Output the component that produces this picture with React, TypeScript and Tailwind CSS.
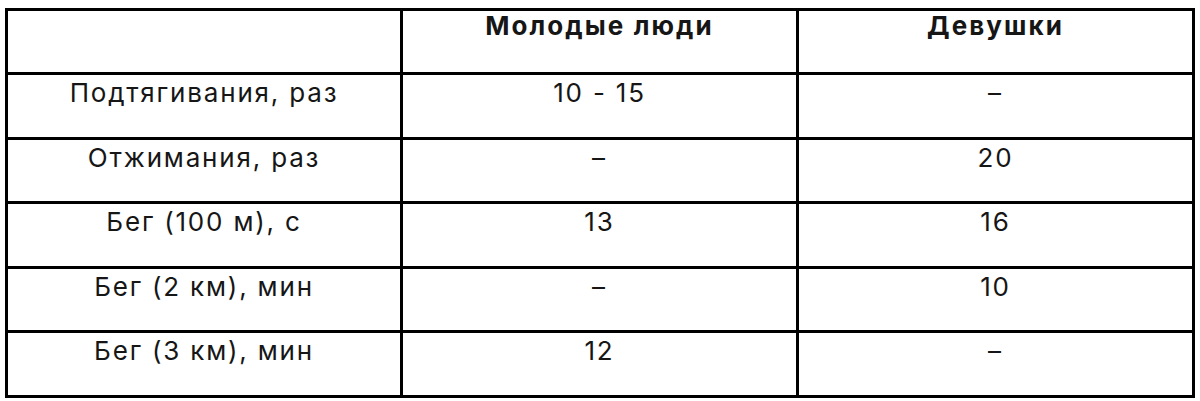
const rows: [string, string, string][] = [
  ["Подтягивания, раз", "10 - 15", "–"],
  ["Отжимания, раз", "–", "20"],
  ["Бег (100 м), с", "13", "16"],
  ["Бег (2 км), мин", "–", "10"],
  ["Бег (3 км), мин", "12", "–"],
];

export default function App() {
  return (
    <div className="w-[1200px] h-[401px] bg-white pt-[8px] pl-[5px]" style={{ fontFamily: "Inter, 'Open Sans', sans-serif" }}>
      <table className="w-[1189px] table-fixed border-collapse text-[#161616]">
        <colgroup>
          <col className="w-[395px]" />
          <col className="w-[396px]" />
          <col className="w-[396px]" />
        </colgroup>
        <thead>
          <tr className="h-[64px]">
            <th className="border-[3px] border-black"></th>
            <th className="border-[3px] border-black align-top pt-0 text-[26px] leading-[30px] tracking-[0.08em] font-bold">Молодые люди</th>
            <th className="border-[3px] border-black align-top pt-0 text-[26px] leading-[30px] tracking-[0.08em] font-bold">Девушки</th>
          </tr>
        </thead>
        <tbody>
          {rows.map((r) => (
            <tr key={r[0]} className="h-[64.5px]">
              {r.map((c, i) => (
                <td key={i} className="border-[3px] border-black align-top text-center pt-0 text-[26px] leading-[35px] tracking-[0.07em] font-normal">
                  {c}
                </td>
              ))}
            </tr>
          ))}
        </tbody>
      </table>
    </div>
  );
}
